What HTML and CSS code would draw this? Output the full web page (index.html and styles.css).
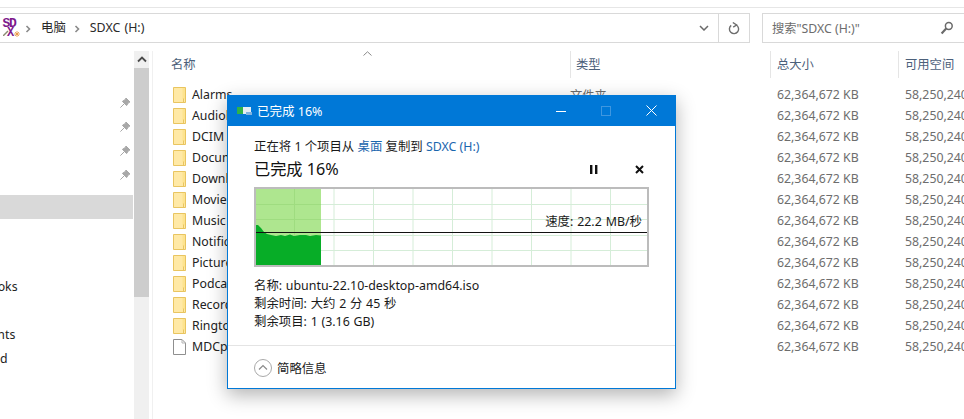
FILE: index.html
```html
<!DOCTYPE html>
<html lang="zh">
<head>
<meta charset="utf-8">
<title>SDXC (H:)</title>
<link rel="stylesheet" href="styles.css">
</head>
<body>
<div class="topline"></div>
<header class="toolbar">
  <div class="address">
    <div class="crumbs">
      <span class="drive"><span class="drive-sd">SD</span><span class="drive-x">X</span><svg class="drive-wand" viewBox="0 0 6 6"><path d="M0 6L5 1" stroke="#8a8a70" stroke-width="1.400"/></svg><svg class="drive-star" viewBox="0 0 6 6"><path d="M3 0V6M0 3H6M1 1L5 5M5 1L1 5" stroke="#e8923a" stroke-width=".8"/></svg></span>
      <svg class="chev" viewBox="0 0 6 8"><path d="M1.5 1L4.5 4L1.5 7" fill="none" stroke="#8a8a8a" stroke-width="1.6"/></svg>
      <span>电脑</span>
      <svg class="chev" viewBox="0 0 6 8"><path d="M1.5 1L4.5 4L1.5 7" fill="none" stroke="#8a8a8a" stroke-width="1.6"/></svg>
      <span>SDXC (H:)</span>
    </div>
    <div class="addr-drop"><svg width="10" height="6" viewBox="0 0 10 6"><path d="M1 1L5 5L9 1" fill="none" stroke="#6a6a6a" stroke-width="1.5"/></svg></div>
    <div class="addr-refresh"><svg width="12" height="13" viewBox="0 0 12 13"><path d="M3.2 3.4A4.6 4.6 0 1 0 8.2 3" fill="none" stroke="#6e6e6e" stroke-width="1.4"/><path d="M4.8 0.5L8.6 3L5.2 5.2" fill="none" stroke="#6e6e6e" stroke-width="1.4"/></svg></div>
  </div>
  <div class="search">
    <span>搜索"SDXC (H:)"</span>
    <svg width="14" height="14" viewBox="0 0 14 14"><circle cx="8.8" cy="5" r="3.4" fill="none" stroke="#6a6a6a" stroke-width="1.5"/><path d="M6.2 7.6L1.6 12.4" stroke="#6a6a6a" stroke-width="2.2"/></svg>
  </div>
</header>
<main class="explorer">
  <nav class="nav">
    <div class="nav-row"><svg class="pin" viewBox="0 0 12 12"><path d="M7 1L11 5L9.6 5.6L7.6 8.6L3.4 4.4L6.4 2.4ZM5 7L1.4 10.6" fill="#a8a8a8" stroke="#a8a8a8"/></svg></div>
    <div class="nav-row"><svg class="pin" viewBox="0 0 12 12"><path d="M7 1L11 5L9.6 5.6L7.6 8.6L3.4 4.4L6.4 2.4ZM5 7L1.4 10.6" fill="#a8a8a8" stroke="#a8a8a8"/></svg></div>
    <div class="nav-row"><svg class="pin" viewBox="0 0 12 12"><path d="M7 1L11 5L9.6 5.6L7.6 8.6L3.4 4.4L6.4 2.4ZM5 7L1.4 10.6" fill="#a8a8a8" stroke="#a8a8a8"/></svg></div>
    <div class="nav-row"><svg class="pin" viewBox="0 0 12 12"><path d="M7 1L11 5L9.6 5.6L7.6 8.6L3.4 4.4L6.4 2.4ZM5 7L1.4 10.6" fill="#a8a8a8" stroke="#a8a8a8"/></svg></div>
    <div class="nav-row nav-selected"></div>
    <div class="nav-lower">
      <div class="nav-text">Audiobooks</div>
      <div class="nav-text"></div>
      <div class="nav-text">Documents</div>
      <div class="nav-text">Download</div>
    </div>
  </nav>
  <div class="scrollbar">
    <div class="scroll-up"><svg width="10" height="7" viewBox="0 0 10 7"><path d="M1 5.5L5 1.5L9 5.5" fill="none" stroke="#4a4a4a" stroke-width="1.8"/></svg></div>
    <div class="scroll-thumb"></div>
  </div>
  <section class="list">
    <div class="list-head">
      <div class="col-head col-name">名称<svg class="sort" width="9" height="5" viewBox="0 0 9 5"><path d="M.5 4.5L4.5 .8L8.5 4.5" fill="none" stroke="#8a8a8a"/></svg></div>
      <div class="col-head col-type">类型</div>
      <div class="col-head col-total">总大小</div>
      <div class="col-head col-free">可用空间</div>
    </div>
    <div class="list-body">
      <div class="row"><svg class="ico"><use href="#folder"/></svg><span class="name">Alarms</span><span class="type">文件夹</span><span class="num">62,364,672 KB</span><span class="num">58,250,240 KB</span></div>
      <div class="row"><svg class="ico"><use href="#folder"/></svg><span class="name">Audiobooks</span><span class="type">文件夹</span><span class="num">62,364,672 KB</span><span class="num">58,250,240 KB</span></div>
      <div class="row"><svg class="ico"><use href="#folder"/></svg><span class="name">DCIM</span><span class="type">文件夹</span><span class="num">62,364,672 KB</span><span class="num">58,250,240 KB</span></div>
      <div class="row"><svg class="ico"><use href="#folder"/></svg><span class="name">Documents</span><span class="type">文件夹</span><span class="num">62,364,672 KB</span><span class="num">58,250,240 KB</span></div>
      <div class="row"><svg class="ico"><use href="#folder"/></svg><span class="name">Download</span><span class="type">文件夹</span><span class="num">62,364,672 KB</span><span class="num">58,250,240 KB</span></div>
      <div class="row"><svg class="ico"><use href="#folder"/></svg><span class="name">Movies</span><span class="type">文件夹</span><span class="num">62,364,672 KB</span><span class="num">58,250,240 KB</span></div>
      <div class="row"><svg class="ico"><use href="#folder"/></svg><span class="name">Music</span><span class="type">文件夹</span><span class="num">62,364,672 KB</span><span class="num">58,250,240 KB</span></div>
      <div class="row"><svg class="ico"><use href="#folder"/></svg><span class="name">Notifications</span><span class="type">文件夹</span><span class="num">62,364,672 KB</span><span class="num">58,250,240 KB</span></div>
      <div class="row"><svg class="ico"><use href="#folder"/></svg><span class="name">Pictures</span><span class="type">文件夹</span><span class="num">62,364,672 KB</span><span class="num">58,250,240 KB</span></div>
      <div class="row"><svg class="ico"><use href="#folder"/></svg><span class="name">Podcasts</span><span class="type">文件夹</span><span class="num">62,364,672 KB</span><span class="num">58,250,240 KB</span></div>
      <div class="row"><svg class="ico"><use href="#folder"/></svg><span class="name">Recordings</span><span class="type">文件夹</span><span class="num">62,364,672 KB</span><span class="num">58,250,240 KB</span></div>
      <div class="row"><svg class="ico"><use href="#folder"/></svg><span class="name">Ringtones</span><span class="type">文件夹</span><span class="num">62,364,672 KB</span><span class="num">58,250,240 KB</span></div>
      <div class="row"><svg class="ico"><use href="#file"/></svg><span class="name">MDCprep.exe</span><span class="type">文件</span><span class="num">62,364,672 KB</span><span class="num">58,250,240 KB</span></div>
    </div>
  </section>
</main>

<svg class="defs" aria-hidden="true">
  <symbol id="folder" viewBox="0 0 13 16">
    <path d="M.5.5H12.5V15.5H.5Z" fill="#fde38f" stroke="#e9c560"/>
    <path d="M1 1H9.5V12L12 12.5V15H1Z" fill="#ffe9a6"/>
    <path d="M10.5 11.5V15" stroke="#e9c560"/>
  </symbol>
  <symbol id="file" viewBox="0 0 13 16">
    <path d="M.5.5H9L12.5 4V15.5H.5Z" fill="#fff" stroke="#8f8f8f"/>
    <path d="M9 .5V4H12.5" fill="none" stroke="#b5b5b5"/>
  </symbol>
</svg>

<aside class="dialog">
  <div class="titlebar">
    <svg class="title-icon" width="15" height="8" viewBox="0 0 15 8"><rect y="0" width="14" height="7" fill="#e4edf4"/><rect x="0" y="0" width="6" height="7" fill="#2fb24a"/><path d="M9 5H15V8H9Z" fill="#7fb3df"/></svg>
    <span class="title-text">已完成 16%</span>
    <div class="win-btns">
      <svg width="10" height="10" viewBox="0 0 10 10"><path d="M0 5.5H10" stroke="#fff"/></svg>
      <svg width="10" height="10" viewBox="0 0 10 10"><rect x=".5" y=".5" width="9" height="9" fill="none" stroke="#3f97e0"/></svg>
      <svg width="11" height="11" viewBox="0 0 11 11"><path d="M.5.5L10.5 10.5M10.5.5L.5 10.5" stroke="#fff"/></svg>
    </div>
  </div>
  <div class="dialog-body">
    <p class="copy-line">正在将 1 个项目从 <a class="link">桌面</a> 复制到 <a class="link">SDXC (H:)</a></p>
    <div class="status">
      <span class="status-text">已完成 16%</span>
      <div class="status-btns">
        <svg width="8" height="9" viewBox="0 0 8 9"><path d="M0 0H2.4V9H0ZM5 0H7.4V9H5Z" fill="#111"/></svg>
        <svg width="9" height="9" viewBox="0 0 9 9"><path d="M1 1L8 8M8 1L1 8" stroke="#111" stroke-width="2"/></svg>
      </div>
    </div>
    <div class="graph">
      <svg class="graph-svg" viewBox="0 0 391 76" width="391" height="76">
        <g stroke="#d5edd8" stroke-width="1" fill="none">
          <path d="M38.5 0V76M78 0V76M117.500 0V76M157 0V76M196.500 0V76M236 0V76M275.500 0V76M315 0V76M354.500 0V76"/>
          <path d="M0 15.500H391M0 30.500H391M0 46.500H391M0 61.500H391"/>
        </g>
        <rect width="65" height="76" fill="#aee68f"/>
        <path d="M38.500 0V76M0 15.500H65M0 30.500H65" stroke="#9fdc80" fill="none"/>
        <path d="M0 36L2 36L5 39L8 43L11 45L15 46L20 47L25 46L29 47L34 45.500L38 47L44 46L50 46L54 47L60 46L65 46.500V76H0Z" fill="#07ad27"/>
        <path d="M0 43.500H391" stroke="#111" stroke-width="1.200"/>
      </svg>
      <span class="speed">速度: 22.2 MB/秒</span>
    </div>
    <dl class="details">
      <div><dt>名称:</dt> <dd>ubuntu-22.10-desktop-amd64.iso</dd></div>
      <div><dt>剩余时间:</dt> <dd>大约 2 分 45 秒</dd></div>
      <div><dt>剩余项目:</dt> <dd>1 (3.16 GB)</dd></div>
    </dl>
  </div>
  <div class="dialog-foot">
    <svg width="18" height="18" viewBox="0 0 18 18"><circle cx="9" cy="9" r="8.500" fill="#fff" stroke="#a9a9a9"/><path d="M5 10.500L9 6.500L13 10.500" fill="none" stroke="#8a8a8a" stroke-width="1.200"/></svg>
    <span>简略信息</span>
  </div>
</aside>
</body>
</html>
```

FILE: styles.css
```css
* { box-sizing: border-box; }
html, body { margin: 0; padding: 0; }
body {
  width: 964px;
  height: 419px;
  overflow: hidden;
  position: relative;
  background: #fff;
  color: #1a1a1a;
  font-family: "Noto Sans", "Noto Sans CJK SC", sans-serif;
  font-size: 12.3px;
}
.topline { height: 8px; border-bottom: 1px solid #e6e6e6; }

.toolbar { display: flex; gap: 12px; height: 30px; margin-top: 5px; }
.address {
  width: 750px;
  display: flex;
  align-items: stretch;
  border: 1px solid #d9d9d9;
  border-left: 0;
}
.crumbs { flex: 1; display: flex; align-items: center; padding-left: 3px; color: #2a2a2a; }
.crumbs > span:not(.drive) { line-height: 1; font-size: 12.4px; word-spacing: 1px; }
.drive { position: relative; width: 15px; height: 17px; margin-right: 6px; font-family: "Liberation Mono", monospace; font-weight: 700; color: #7d1a8c; }
.drive-sd { position: absolute; left: -.5px; top: -1px; font-size: 13px; line-height: 10px; letter-spacing: -1.4px; }
.drive-x { position: absolute; left: 4px; top: 8px; font-size: 12px; line-height: 10px; }
.drive-wand { position: absolute; left: 0; top: 10px; width: 6px; height: 6px; }
.drive-star { position: absolute; left: 11px; top: 11px; width: 6px; height: 6px; }
.chev { width: 6px; height: 8px; margin: 1px 10px 0 1px; }
.crumbs .chev:nth-of-type(2) { margin-left: 8px; }
.addr-drop { width: 30px; display: flex; align-items: center; justify-content: center; padding-left: 1px; }
.addr-refresh { width: 31px; display: flex; align-items: center; justify-content: center; border-left: 1px solid #d9d9d9; }
.search {
  flex: 1;
  display: flex;
  align-items: center;
  justify-content: space-between;
  padding: 0 10px 0 9px;
  border: 1px solid #d9d9d9;
  border-right: 0;
  color: #6d6d6d;
}

.explorer { display: flex; height: 376px; margin-top: 8px; }
.nav { width: 134px; padding-top: 40px; flex: none; overflow: hidden; }
.nav-row { height: 24px; display: flex; align-items: center; justify-content: flex-end; padding-right: 3px; }
.nav-selected { background: #d9d9d9; margin-top: 8px; margin-right: 1px; }
.pin { width: 12px; height: 12px; }
.nav-lower { margin-top: 56px; }
.nav-text { height: 24px; line-height: 24px; margin-left: -51px; white-space: nowrap; color: #222; }

.scrollbar { width: 15px; flex: none; background: #f0f0f0; }
.scroll-up { height: 17px; display: flex; align-items: center; justify-content: center; }
.scroll-thumb { height: 229px; background: #cdcdcd; }

.list { flex: 1; margin-left: 3px; border-left: 1px solid #f0f0f0; min-width: 0; overflow: hidden; }
.list-head { display: flex; height: 27px; }
.col-head { color: #4c607a; line-height: 28px; padding-left: 5px; border-right: 1px solid #e5e5e5; flex: none; position: relative; }
.col-name { width: 418px; padding-left: 18px; }
.col-type { width: 200px; }
.col-total { width: 128px; padding-left: 6px; }
.col-free { width: 70px; padding-left: 6px; border-right: 0; white-space: nowrap; }
.sort { position: absolute; left: 210px; top: 0; }
.list-body { padding-top: 6px; }
.row { display: flex; align-items: center; height: 21px; white-space: nowrap; }
.ico { width: 13px; height: 16px; margin-left: 20px; flex: none; }
.name { width: 384px; padding-left: 6px; margin-left: 0; flex: none; color: #222; }
.type { width: 201px; flex: none; color: #6d6d6d; }
.num { width: 128px; flex: none; color: #6d6d6d; }
.type + .num { margin-left: 6px; }

.defs { position: absolute; width: 0; height: 0; }

.dialog {
  position: absolute;
  left: 227px;
  top: 95px;
  width: 449px;
  height: 294px;
  display: flex;
  flex-direction: column;
  background: #fff;
  border: 1px solid #0078d7;
  box-shadow: 0 6px 18px rgba(0, 0, 0, .3);
  font-size: 12.4px;
}
.titlebar { height: 30px; flex: none; background: #0078d7; color: #fff; display: flex; align-items: center; padding: 0 0 1px 9px; }
.title-icon { margin-right: 5px; }
.title-text { flex: 1; font-size: 12.5px; }
.win-btns { display: flex; align-items: center; gap: 35px; padding-right: 18px; }
.dialog-body { flex: 1; padding: 11px 26px 0; }
.copy-line { margin: 0; height: 20px; line-height: 20px; color: #1a1a1a; }
.link { color: #1a66ae; }
.status { display: flex; align-items: center; justify-content: space-between; height: 24px; margin-top: -1px; }
.status-text { font-size: 16.2px; color: #111; }
.status-btns { display: flex; gap: 37px; padding: 2px 5px 0 0; align-items: center; }
.graph { position: relative; width: 395px; height: 80px; margin-top: 7px; border: 2px solid #bcbcbc; }
.graph-svg { display: block; }
.speed { position: absolute; right: 5px; top: 24px; line-height: 18px; word-spacing: .7px; }
.details { margin: 10px 0 0; word-spacing: .5px; }
.details div { height: 18px; line-height: 18px; white-space: nowrap; }
.details dt, .details dd { display: inline; margin: 0; }
.dialog-foot { flex: none; height: 43px; padding: 1px 0 0 26px; border-top: 1px solid #e4e4e4; display: flex; align-items: center; gap: 5px; }
```
